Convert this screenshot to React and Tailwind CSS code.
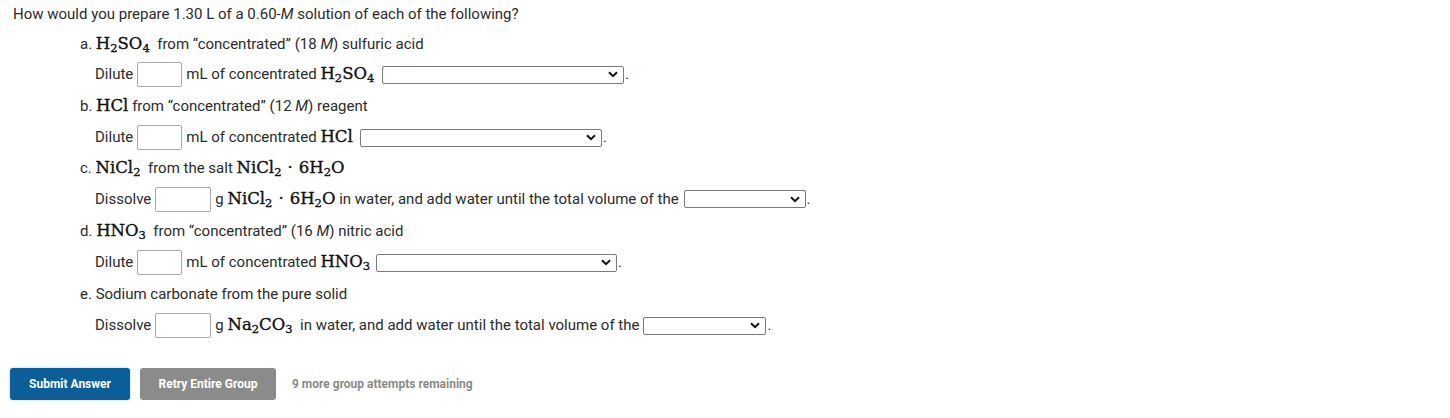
import React from 'react';

const F = ({ children }) => (
  <span
    className="text-[16.5px] text-[#111] [-webkit-text-stroke:0.35px_#111]"
    style={{ fontFamily: '"DejaVu Serif", "Liberation Serif", serif' }}
  >
    {children}
  </span>
);

const Sub = ({ children }) => (
  <sub className="text-[11.5px] relative top-[3px] align-baseline">{children}</sub>
);

const H2SO4 = () => (
  <F>H<Sub>2</Sub>SO<Sub>4</Sub></F>
);
const HCl = () => <F>HCl</F>;
const NiCl2 = () => <F>NiCl<Sub>2</Sub></F>;
const Hydrate = () => (
  <F>
    NiCl<Sub>2</Sub><span className="mx-[6px]">·</span>6H<Sub>2</Sub>O
  </F>
);
const HNO3 = () => <F>HNO<Sub>3</Sub></F>;
const Na2CO3 = () => <F>Na<Sub>2</Sub>CO<Sub>3</Sub></F>;

function Box({ w = 'w-[45px]' }) {
  return <div className={`${w} h-[25px] border border-[#a9a9a9] rounded-[2px] bg-white`} />;
}

function Select({ w }) {
  return (
    <span className="inline-flex items-center">
      <span className={`${w} h-[18px] border border-[#7a7a7a] rounded-[2px] bg-white flex items-center justify-end pr-[5px]`}>
        <svg width="10" height="7" viewBox="0 0 10 7">
          <path d="M1 1.2 L5 5.2 L9 1.2" fill="none" stroke="#111" strokeWidth="2" />
        </svg>
      </span>
      <span className="ml-[1px]">.</span>
    </span>
  );
}

function Row({ h, children, indent = 'pl-[95px]' }) {
  return <div className={`${h} ${indent} flex items-center whitespace-nowrap`}>{children}</div>;
}

export default function App() {
  return (
    <div
      className="w-[1450px] h-[418px] bg-white text-[15px] text-[#2b2b2b]"
      style={{ fontFamily: 'Roboto, "Liberation Sans", sans-serif' }}
    >
      <div className="h-[29px] pl-[13px] flex items-center">
        How would you prepare 1.30 L of a 0.60-<i>M</i>&nbsp;solution of each of the following?
      </div>

      <Row h="h-[30px]" indent="pl-[80px]">
        a.&nbsp;<H2SO4 />&nbsp;&nbsp;from “concentrated” (18&nbsp;<i>M</i>) sulfuric acid
      </Row>
      <Row h="h-[31px]">
        Dilute<span className="w-[4px]" />
        <Box />
        <span className="w-[4px]" />mL of concentrated&nbsp;<H2SO4 />
        <span className="w-[8px]" />
        <Select w="w-[242px]" />
      </Row>

      <Row h="h-[32px]" indent="pl-[80px]">
        b.&nbsp;<HCl />&nbsp;from “concentrated” (12&nbsp;<i>M</i>) reagent
      </Row>
      <Row h="h-[31px]">
        Dilute<span className="w-[4px]" />
        <Box />
        <span className="w-[4px]" />mL of concentrated&nbsp;<HCl />
        <span className="w-[7px]" />
        <Select w="w-[242px]" />
      </Row>

      <Row h="h-[30px]" indent="pl-[80px]">
        c.&nbsp;<NiCl2 />&nbsp;&nbsp;from the salt&nbsp;<Hydrate />
      </Row>
      <Row h="h-[32px]">
        Dissolve<span className="w-[4px]" />
        <Box w="w-[56px]" />
        <span className="w-[4px]" />g&nbsp;<Hydrate />&nbsp;in water, and add water until the total volume of the
        <span className="w-[5px]" />
        <Select w="w-[122px]" />
      </Row>

      <Row h="h-[32px]" indent="pl-[80px]">
        d.&nbsp;<HNO3 />&nbsp;&nbsp;from “concentrated” (16&nbsp;<i>M</i>) nitric acid
      </Row>
      <Row h="h-[31px]">
        Dilute<span className="w-[4px]" />
        <Box />
        <span className="w-[4px]" />mL of concentrated&nbsp;<HNO3 />
        <span className="w-[6px]" />
        <Select w="w-[241px]" />
      </Row>

      <Row h="h-[32px]" indent="pl-[80px]">
        e. Sodium carbonate from the pure solid
      </Row>
      <Row h="h-[31px]">
        Dissolve<span className="w-[4px]" />
        <Box w="w-[56px]" />
        <span className="w-[4px]" />g&nbsp;<Na2CO3 />&nbsp;&nbsp;in water, and add water until the total volume of the
        <span className="w-[4px]" />
        <Select w="w-[123px]" />
      </Row>

      <div className="mt-[27px] pl-[10px] flex items-center gap-[10px]">
        <button className="w-[120px] h-[32px] rounded-[3px] bg-[#0b5e97] text-white text-[12px] font-bold shadow-[0_0_3px_rgba(80,160,230,0.5)]">
          Submit Answer
        </button>
        <button className="w-[136px] h-[32px] rounded-[3px] bg-[#8b8b8b] text-white text-[12px] font-bold">
          Retry Entire Group
        </button>
        <span className="ml-[6px] text-[12px] font-bold text-[#8a8a8a]">9 more group attempts remaining</span>
      </div>
    </div>
  );
}
